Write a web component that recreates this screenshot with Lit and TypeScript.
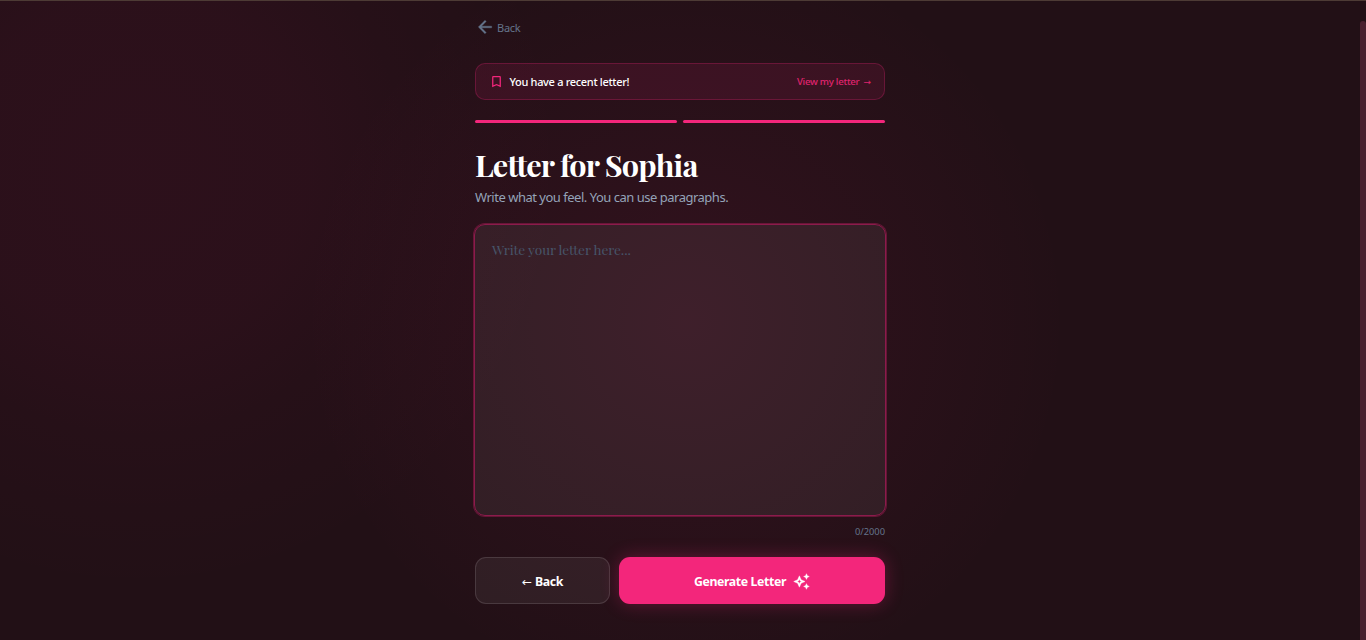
import { LitElement, html, css, svg } from "lit";
import { customElement, state } from "lit/decorators.js";

const icons = {
  arrow: svg`<path stroke="currentColor" stroke-width=".4" d="M20 11H7.83l5.59-5.59L12 4l-8 8 8 8 1.41-1.41L7.83 13H20v-2z"/>`,
  bookmark: svg`<path d="M17 3H7c-1.1 0-2 .9-2 2v16l7-3 7 3V5c0-1.1-.9-2-2-2zm0 15-5-2.18L7 18V5h10v13z"/>`,
  sparkle: svg`<path stroke="currentColor" stroke-width=".6" fill-rule="evenodd" d="M19 9l1.25-2.75L23 5l-2.75-1.25L19 1l-1.25 2.75L15 5l2.75 1.25L19 9zM11.5 9.5L9 4 6.5 9.5 1 12l5.5 2.5L9 20l2.5-5.5L17 12l-5.5-2.5zM9.99 12.99L9 15.17l-.99-2.18L5.83 12l2.18-.99L9 8.83l.99 2.18 2.18.99-2.18.99zM19 15l-1.25 2.75L15 19l2.75 1.25L19 23l1.25-2.75L23 19l-2.75-1.25L19 15z"/>`,
};

@customElement("app-root")
export class AppRoot extends LitElement {
  @state() private letter = "";

  static styles = css`
    :host {
      display: flex;
      box-sizing: border-box;
      width: 100%;
      height: 640px;
      overflow: hidden;
      border-top: 1px solid #4d3b35;
      font-family: "Noto Sans", "Open Sans", sans-serif;
      color: #fff;
      background:
        radial-gradient(circle at 686px 320px, rgba(244, 37, 123, 0.08), rgba(244, 37, 123, 0) 384px),
        radial-gradient(circle at 137px 165px, rgba(244, 20, 123, 0.05), rgba(244, 20, 123, 0.042) 170px, rgba(244, 20, 123, 0.02) 270px, rgba(244, 20, 123, 0) 430px),
        #221016;
    }
    * { box-sizing: border-box; }
    svg { display: block; fill: currentColor; flex: none; }
    .page { flex: 1; display: flex; justify-content: center; }
    .track { width: 6px; padding-top: 20px; display: flex; }
    .thumb { flex: 1; background: #49202f; border-radius: 3px 3px 0 0; }
    .column { width: 410px; display: flex; flex-direction: column; padding-top: 16px; }
    .nav { display: flex; align-items: center; gap: 2px; height: 20px; color: #64748b; font-size: 11px; }
    .nav-label { letter-spacing: -0.25px; }
    .notice {
      margin-top: 26px; height: 37px; padding: 0 13px 0 12.5px;
      display: flex; align-items: center;
      border: 1px solid rgba(244, 37, 123, 0.25); border-radius: 10px;
      background: rgba(244, 37, 123, 0.1);
    }
    .notice svg { color: #f3267b; }
    .notice-text { margin-left: 6px; flex: 1; font-size: 11px; font-weight: 500; letter-spacing: -0.32px; }
    .notice-link { display: flex; align-items: center; gap: 4px; font-size: 9.7px; font-weight: 500; color: #e0246f; letter-spacing: -0.27px; }
    .glyph { font-family: "DejaVu Sans", sans-serif; letter-spacing: 0; }
    .notice-link .glyph { font-size: 9px; }
    .steps { margin-top: 20px; display: flex; gap: 6px; }
    .step { flex: 1; height: 3px; border-radius: 2px; background: #f3267b; }
    h1 {
      margin: 23px 0 0; height: 38px; white-space: nowrap;
      font: 700 30.6px/38px "Playfair Display", "Liberation Serif", serif;
      letter-spacing: -0.83px;
    }
    .hint { height: 20px; margin-top: 3px; line-height: 20px; font-size: 13px; color: #94a3b8; letter-spacing: -0.49px; white-space: nowrap; }
    textarea {
      display: block; margin: 17px -1px 0; width: 412px; height: 292px; padding: 13px 17px;
      resize: none; outline: none;
      border: 1px solid #8c1b4c; border-radius: 11px;
      box-shadow: 0 0 0 1px rgba(244, 37, 123, 0.3);
      background: rgba(255, 255, 255, 0.06);
      color: #fff; font: 13.6px/22px "Playfair Display", "Liberation Serif", serif; letter-spacing: -0.06px;
    }
    textarea::placeholder { color: #475569; opacity: 1; }
    .count { margin-top: 9px; height: 14px; line-height: 14px; text-align: right; font-size: 9.3px; color: #64748b; }
    .actions { margin-top: 18px; display: flex; gap: 9px; }
    button {
      height: 47px; padding: 2px 0 0; border-radius: 11px; color: #fff;
      display: flex; align-items: center; justify-content: center;
      font: 700 12.3px/18px "Noto Sans", sans-serif; letter-spacing: -0.37px;
    }
    .secondary { width: 135px; gap: 3px; border: 1px solid rgba(255, 255, 255, 0.12); background: rgba(255, 255, 255, 0.06); }
    .secondary .glyph { font-size: 12px; font-weight: 400; }
    .primary { flex: 1; gap: 7px; border: 0; background: #f3267b; box-shadow: 0 0 18px rgba(244, 37, 123, 0.3); }
  `;

  private icon(name: keyof typeof icons, size: number) {
    return html`<svg width=${size} height=${size} viewBox="0 0 24 24">${icons[name]}</svg>`;
  }

  render() {
    return html`
      <main class="page">
        <div class="column">
          <div class="nav">${this.icon("arrow", 20)}<span class="nav-label">Back</span></div>
          <div class="notice">
            ${this.icon("bookmark", 15)}
            <span class="notice-text">You have a recent letter!</span>
            <span class="notice-link">View my letter <span class="glyph">→</span></span>
          </div>
          <div class="steps"><div class="step"></div><div class="step"></div></div>
          <h1>Letter for Sophia</h1>
          <div class="hint">Write what you feel. You can use paragraphs.</div>
          <textarea
            maxlength="2000"
            placeholder="Write your letter here..."
            @input=${(e: Event) => (this.letter = (e.target as HTMLTextAreaElement).value)}
          ></textarea>
          <div class="count">${this.letter.length}/2000</div>
          <div class="actions">
            <button class="secondary"><span class="glyph">←</span> Back</button>
            <button class="primary"><span>Generate Letter</span>${this.icon("sparkle", 17)}</button>
          </div>
        </div>
      </main>
      <div class="track"><div class="thumb"></div></div>
    `;
  }
}
